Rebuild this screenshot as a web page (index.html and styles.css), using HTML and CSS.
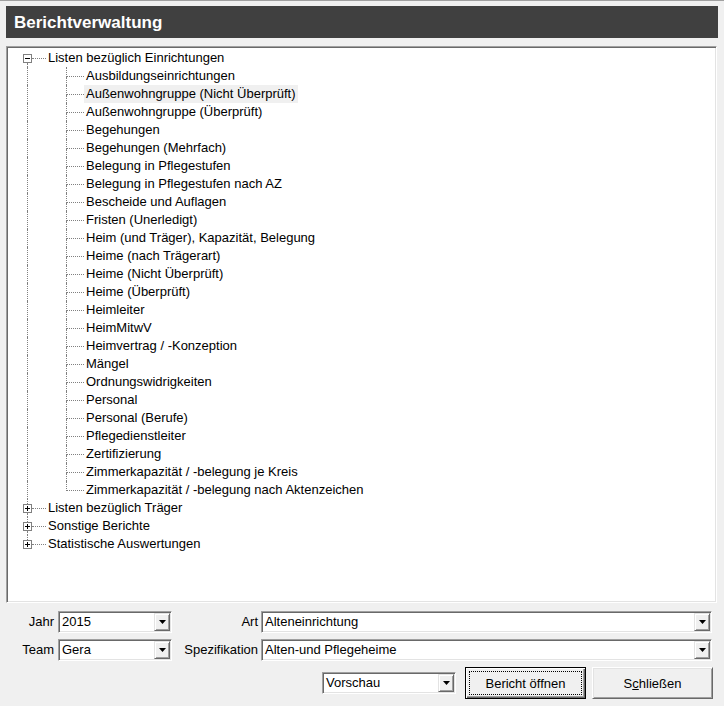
FILE: index.html
```html
<!doctype html>
<html>
<head>
<meta charset="utf-8">
<title>Berichtverwaltung</title>
<link rel="stylesheet" href="styles.css">
</head>
<body>
<div class="win">
  <div class="title">Berichtverwaltung</div>

  <div class="tree">
    <div class="row">
      <span class="nd"><i class="up none"></i><svg class="box" width="9" height="9"><rect x="0.5" y="0.5" width="8" height="8" fill="#fff" stroke="#808080"/><path d="M2 4.5h5" stroke="#000"/></svg><i class="dn"></i></span><span class="hz"></span><span class="lbl">Listen bezüglich Einrichtungen</span>
    </div>
    <div class="row ch"><span class="vl"></span><span class="br"><i></i><u></u></span><span class="lbl">Ausbildungseinrichtungen</span></div>
    <div class="row ch"><span class="vl"></span><span class="br"><i></i><u></u></span><span class="lbl sel">Außenwohngruppe (Nicht Überprüft)</span></div>
    <div class="row ch"><span class="vl"></span><span class="br"><i></i><u></u></span><span class="lbl">Außenwohngruppe (Überprüft)</span></div>
    <div class="row ch"><span class="vl"></span><span class="br"><i></i><u></u></span><span class="lbl">Begehungen</span></div>
    <div class="row ch"><span class="vl"></span><span class="br"><i></i><u></u></span><span class="lbl">Begehungen (Mehrfach)</span></div>
    <div class="row ch"><span class="vl"></span><span class="br"><i></i><u></u></span><span class="lbl">Belegung in Pflegestufen</span></div>
    <div class="row ch"><span class="vl"></span><span class="br"><i></i><u></u></span><span class="lbl">Belegung in Pflegestufen nach AZ</span></div>
    <div class="row ch"><span class="vl"></span><span class="br"><i></i><u></u></span><span class="lbl">Bescheide und Auflagen</span></div>
    <div class="row ch"><span class="vl"></span><span class="br"><i></i><u></u></span><span class="lbl">Fristen (Unerledigt)</span></div>
    <div class="row ch"><span class="vl"></span><span class="br"><i></i><u></u></span><span class="lbl">Heim (und Träger), Kapazität, Belegung</span></div>
    <div class="row ch"><span class="vl"></span><span class="br"><i></i><u></u></span><span class="lbl">Heime (nach Trägerart)</span></div>
    <div class="row ch"><span class="vl"></span><span class="br"><i></i><u></u></span><span class="lbl">Heime (Nicht Überprüft)</span></div>
    <div class="row ch"><span class="vl"></span><span class="br"><i></i><u></u></span><span class="lbl">Heime (Überprüft)</span></div>
    <div class="row ch"><span class="vl"></span><span class="br"><i></i><u></u></span><span class="lbl">Heimleiter</span></div>
    <div class="row ch"><span class="vl"></span><span class="br"><i></i><u></u></span><span class="lbl">HeimMitwV</span></div>
    <div class="row ch"><span class="vl"></span><span class="br"><i></i><u></u></span><span class="lbl">Heimvertrag / -Konzeption</span></div>
    <div class="row ch"><span class="vl"></span><span class="br"><i></i><u></u></span><span class="lbl">Mängel</span></div>
    <div class="row ch"><span class="vl"></span><span class="br"><i></i><u></u></span><span class="lbl">Ordnungswidrigkeiten</span></div>
    <div class="row ch"><span class="vl"></span><span class="br"><i></i><u></u></span><span class="lbl">Personal</span></div>
    <div class="row ch"><span class="vl"></span><span class="br"><i></i><u></u></span><span class="lbl">Personal (Berufe)</span></div>
    <div class="row ch"><span class="vl"></span><span class="br"><i></i><u></u></span><span class="lbl">Pflegedienstleiter</span></div>
    <div class="row ch"><span class="vl"></span><span class="br"><i></i><u></u></span><span class="lbl">Zertifizierung</span></div>
    <div class="row ch"><span class="vl"></span><span class="br"><i></i><u></u></span><span class="lbl">Zimmerkapazität / -belegung je Kreis</span></div>
    <div class="row ch"><span class="vl"></span><span class="br"><i></i></span><span class="lbl">Zimmerkapazität / -belegung nach Aktenzeichen</span></div>
    <div class="row">
      <span class="nd"><i class="up"></i><svg class="box" width="9" height="9"><rect x="0.5" y="0.5" width="8" height="8" fill="#fff" stroke="#808080"/><path d="M2 4.5h5M4.5 2v5" stroke="#000"/></svg><i class="dn"></i></span><span class="hz"></span><span class="lbl">Listen bezüglich Träger</span>
    </div>
    <div class="row">
      <span class="nd"><i class="up"></i><svg class="box" width="9" height="9"><rect x="0.5" y="0.5" width="8" height="8" fill="#fff" stroke="#808080"/><path d="M2 4.5h5M4.5 2v5" stroke="#000"/></svg><i class="dn"></i></span><span class="hz"></span><span class="lbl">Sonstige Berichte</span>
    </div>
    <div class="row">
      <span class="nd"><i class="up"></i><svg class="box" width="9" height="9"><rect x="0.5" y="0.5" width="8" height="8" fill="#fff" stroke="#808080"/><path d="M2 4.5h5M4.5 2v5" stroke="#000"/></svg><i class="dn none"></i></span><span class="hz"></span><span class="lbl">Statistische Auswertungen</span>
    </div>
  </div>

  <div class="form">
    <label class="cap">Jahr</label>
    <div class="combo"><span class="val">2015</span><span class="drop"><svg width="7" height="4"><path d="M0 0h7L3.5 4z" fill="#000"/></svg></span></div>
    <label class="cap">Art</label>
    <div class="combo"><span class="val">Alteneinrichtung</span><span class="drop"><svg width="7" height="4"><path d="M0 0h7L3.5 4z" fill="#000"/></svg></span></div>

    <label class="cap">Team</label>
    <div class="combo"><span class="val">Gera</span><span class="drop"><svg width="7" height="4"><path d="M0 0h7L3.5 4z" fill="#000"/></svg></span></div>
    <label class="cap">Spezifikation</label>
    <div class="combo"><span class="val">Alten-und Pflegeheime</span><span class="drop"><svg width="7" height="4"><path d="M0 0h7L3.5 4z" fill="#000"/></svg></span></div>
  </div>

  <div class="actions">
    <div class="combo mode"><span class="val">Vorschau</span><span class="drop"><svg width="7" height="4"><path d="M0 0h7L3.5 4z" fill="#000"/></svg></span></div>
    <div class="btn def"><span class="face">Bericht öffnen</span></div>
    <div class="btn"><span class="face">S<u>c</u>hließen</span></div>
  </div>
</div>
</body>
</html>
```

FILE: styles.css
```css
html, body {
        margin: 0;
        background: #f0f0f0;
}
body {
        border-top: 1px solid #a0a0a0;
        font-family: "Liberation Sans", Arial, sans-serif;
        font-size: 13px;
        color: #000;
}
.win {
        padding: 5px 6px 0 6px;
}
.title {
        height: 32px;
        line-height: 33px;
        background: #404040;
        color: #fff;
        font-weight: bold;
        font-size: 17px;
        padding-left: 8px;
}

/* tree */
.tree {
        margin-top: 8px;
        height: 557px;
        box-sizing: border-box;
        margin-right: 1px;
        background: #fff;
        border: 1px solid;
        border-color: #a0a0a0 #fff #fff #a0a0a0;
        box-shadow: inset 1px 1px #696969, inset -1px -1px #e3e3e3;
        padding: 2px 1px 1px 1px;
}
.row {
        display: flex;
        height: 18px;
        line-height: 18px;
        padding-left: 15px;
}
.nd {
        width: 9px;
        display: flex;
        flex-direction: column;
}
.nd i {
        display: block;
        margin-left: 4px;
        border-left: 1px dotted #808080;
}
.nd .up { height: 5px; }
.nd .dn { flex: 1; }
.nd .none { border-left-color: transparent; }
.box { display: block; }
.hz {
        width: 14px;
        height: 9px;
        border-bottom: 1px dotted #808080;
}
.row.ch { padding-left: 19px; }
.vl {
        width: 38px;
        border-left: 1px dotted #808080;
}
.br {
        width: 18px;
        display: flex;
        flex-direction: column;
}
.br i {
        display: block;
        height: 9px;
        border-left: 1px dotted #808080;
        border-bottom: 1px dotted #808080;
}
.br u {
        display: block;
        flex: 1;
        border-left: 1px dotted #808080;
}
.lbl {
        padding: 0 2px;
        white-space: nowrap;
}
.lbl.sel { background: #f0f0f0; }

/* form */
.form {
        display: grid;
        grid-template-columns: 52px 114px 89px 1fr;
        grid-auto-rows: 22px;
        row-gap: 6px;
        margin: 8px 6px 0 0;
}
.cap {
        text-align: right;
        padding-right: 4px;
        line-height: 22px;
}
.cap:nth-child(4n+3) { padding-right: 3px; }
.combo {
        display: flex;
        height: 22px;
        box-sizing: border-box;
        background: #fff;
        border: 1px solid;
        border-color: #a0a0a0 #fff #fff #a0a0a0;
        box-shadow: inset 1px 1px #696969, inset -1px -1px #e3e3e3;
        padding: 1px;
}
.val {
        flex: 1;
        padding-left: 2px;
        line-height: 18px;
        white-space: nowrap;
}
.drop {
        width: 16px;
        box-sizing: border-box;
        display: flex;
        align-items: center;
        justify-content: center;
        background: #f0f0f0;
        border: 1px solid;
        border-color: #e3e3e3 #696969 #696969 #e3e3e3;
        box-shadow: inset 1px 1px #fff, inset -1px -1px #a0a0a0;
}
.actions {
        display: flex;
        justify-content: flex-end;
        align-items: center;
        margin: 6px 5px 0 0;
}
.combo.mode {
        width: 134px;
        margin-right: 3px;
}
.btn {
        width: 121px;
        height: 32px;
        box-sizing: border-box;
        display: flex;
        padding: 3px;
        background: #f0f0f0;
        border: 1px solid;
        border-color: #fff #696969 #696969 #fff;
        box-shadow: inset 1px 1px #e3e3e3, inset -1px -1px #a0a0a0;
        margin-left: 6px;
}
.btn.def {
        border-color: #000;
        box-shadow: inset 1px 1px #fff, inset -1px -1px #696969, inset -2px -2px #a0a0a0;
}
.face {
        flex: 1;
        display: flex;
        align-items: center;
        justify-content: center;
        border: 1px dotted transparent;
}
.def .face { border-color: #000; }
```
